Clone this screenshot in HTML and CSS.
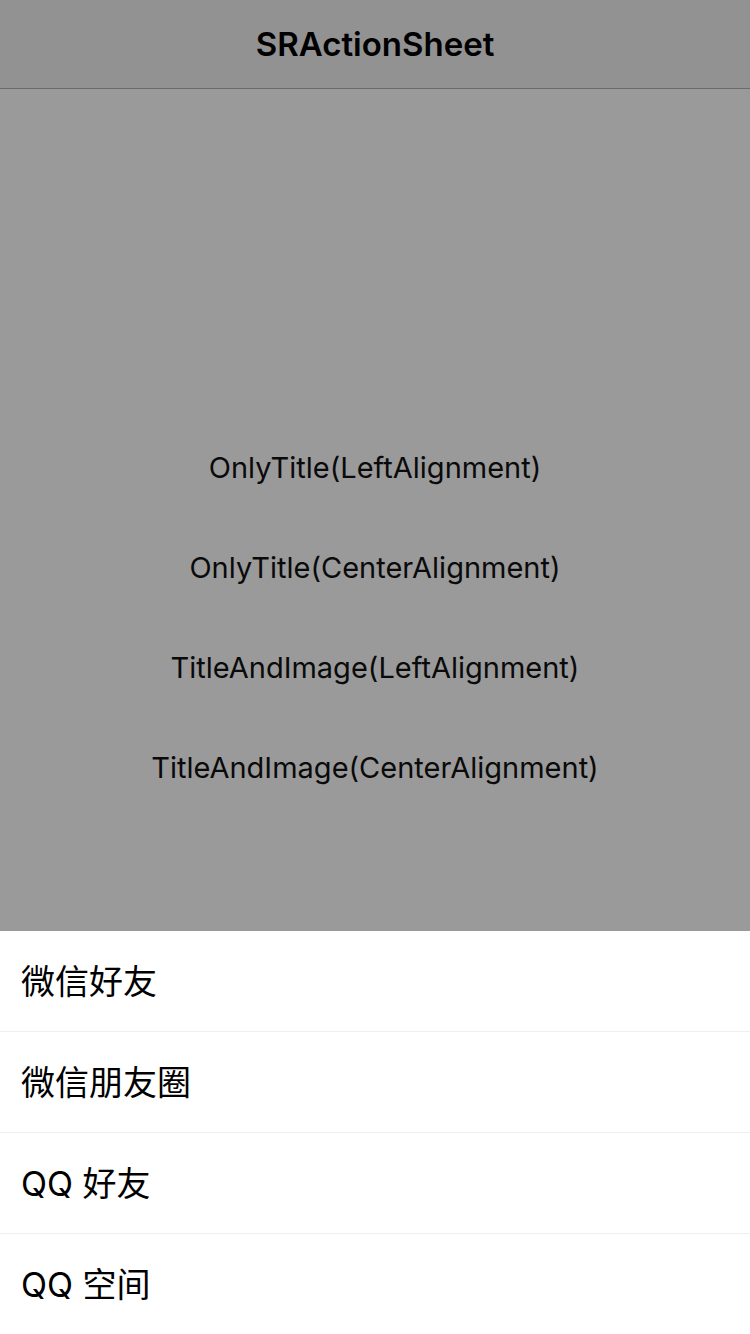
FILE: index.html
```html
<!DOCTYPE html>
<html lang="zh">
<head>
<meta charset="utf-8">
<title>SRActionSheet</title>
<link rel="stylesheet" href="styles.css">
</head>
<body>
<div class="page">
  <header class="nav"><h1 class="nav-title">SRActionSheet</h1></header>
  <main class="content">
    <div class="btn">OnlyTitle(LeftAlignment)</div>
    <div class="btn">OnlyTitle(CenterAlignment)</div>
    <div class="btn">TitleAndImage(LeftAlignment)</div>
    <div class="btn">TitleAndImage(CenterAlignment)</div>
  </main>
  <section class="sheet">
    <div class="sheet-row">微信好友</div>
    <div class="sheet-row">微信朋友圈</div>
    <div class="sheet-row">QQ 好友</div>
    <div class="sheet-row">QQ 空间</div>
  </section>
</div>
</body>
</html>
```
FILE: styles.css
```css
html, body {
  margin: 0;
  padding: 0;
}
body {
  font-family: Inter, "Noto Sans CJK SC", sans-serif;
  color: #000;
}
.page {
  width: 750px;
  height: 1334px;
  display: flex;
  flex-direction: column;
  overflow: hidden;
}
.nav {
  height: 88px;
  background: #929292;
  border-bottom: 1px solid #6a6a6a;
  display: flex;
  align-items: center;
  justify-content: center;
  flex-shrink: 0;
}
.nav-title {
  margin: 0;
  font-size: 33px;
  font-weight: 600;
  letter-spacing: 0;
}
.content {
  flex: 1;
  background: #9a9a9a;
  display: flex;
  flex-direction: column;
  padding-top: 328px;
}
.btn {
  height: 100px;
  display: flex;
  align-items: center;
  justify-content: center;
  font-size: 29px;
  color: #0a0a0a;
}
.sheet {
  background: #fff;
  display: flex;
  flex-direction: column;
  flex-shrink: 0;
}
.sheet-row {
  height: 100px;
  box-sizing: border-box;
  display: flex;
  align-items: center;
  padding-left: 21px;
  padding-bottom: 4px;
  font-size: 34px;
}
.sheet-row + .sheet-row {
  height: 101px;
  border-top: 1px solid #efefef;
}
```
